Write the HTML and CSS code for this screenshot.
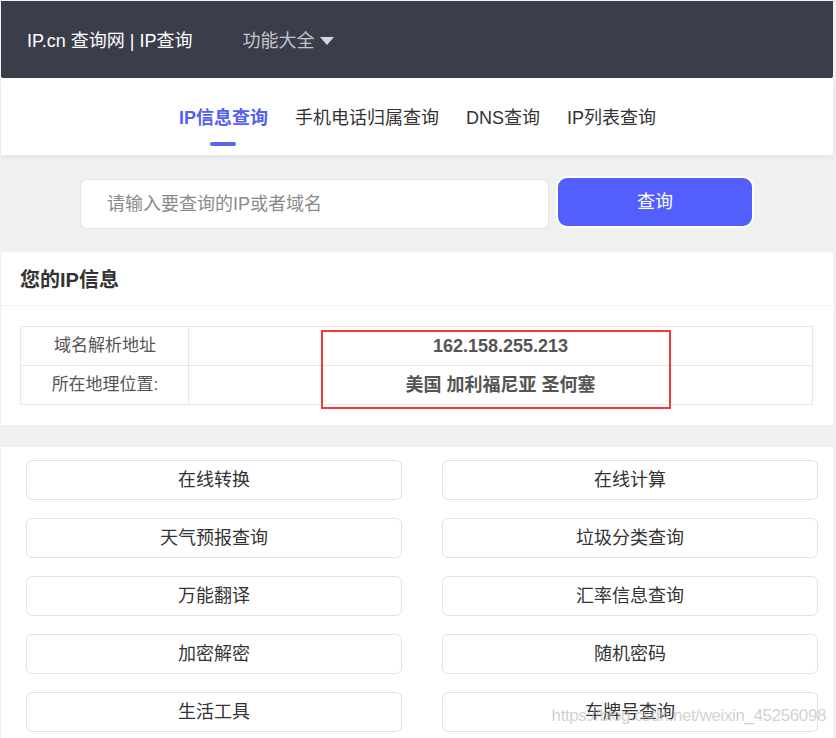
FILE: index.html
```html
<!DOCTYPE html>
<html lang="zh-CN">
<head>
<meta charset="utf-8">
<title>IP.cn 查询网 | IP查询</title>
<link rel="stylesheet" href="styles.css">
</head>
<body>
<div class="page">
  <header class="topbar">
    <span class="brand">IP.cn 查询网 | IP查询</span>
    <span class="menu">功能大全<span class="caret"></span></span>
  </header>
  <nav class="tabs">
    <a class="tab active">IP信息查询</a>
    <a class="tab">手机电话归属查询</a>
    <a class="tab">DNS查询</a>
    <a class="tab">IP列表查询</a>
  </nav>
  <section class="search">
    <div class="input">请输入要查询的IP或者域名</div>
    <div class="btn">查询</div>
  </section>
  <section class="card info">
    <h2 class="card-title">您的IP信息</h2>
    <div class="table-wrap">
      <table class="info-table">
        <tr><td class="label">域名解析地址</td><td class="value">162.158.255.213</td></tr>
        <tr><td class="label">所在地理位置:</td><td class="value">美国 加利福尼亚 圣何塞</td></tr>
      </table>
      <div class="highlight"></div>
    </div>
  </section>
  <section class="card tools">
    <a class="tool">在线转换</a>
    <a class="tool">在线计算</a>
    <a class="tool">天气预报查询</a>
    <a class="tool">垃圾分类查询</a>
    <a class="tool">万能翻译</a>
    <a class="tool">汇率信息查询</a>
    <a class="tool">加密解密</a>
    <a class="tool">随机密码</a>
    <a class="tool">生活工具</a>
    <a class="tool">车牌号查询</a>
    <div class="watermark">https://blog.csdn.net/weixin_45256098</div>
  </section>
</div>
</body>
</html>
```

FILE: styles.css
```css
html, body {
  margin: 0;
  padding: 0;
  background: #f0f0f1;
  height: 100%;
  overflow: hidden;
}
body {
  font-family: "Liberation Sans", "Noto Sans CJK SC", sans-serif;
  color: #333;
}
.page {
  padding: 1px 3px 0 1px;
}
.topbar {
  height: 77px;
  background: #3a3d4a;
  border-radius: 0 0 2px 2px;
  display: flex;
  align-items: center;
  padding-left: 26px;
  font-size: 18px;
  line-height: 24px;
}
.brand {
  color: #fff;
  padding-top: 2px;
}
.menu {
  color: #c4c6cc;
  margin-left: 50px;
  display: flex;
  align-items: center;
  padding-top: 2px;
}
.caret {
  width: 0;
  height: 0;
  border-left: 7px solid transparent;
  border-right: 7px solid transparent;
  border-top: 8px solid #d6d7db;
  margin-left: 6px;
}
.tabs {
  height: 77px;
  background: #fff;
  display: flex;
  justify-content: center;
  align-items: center;
  gap: 27px;
  box-shadow: 0 2px 5px rgba(40, 60, 120, 0.07);
  position: relative;
  padding-left: 1px;
}
.tab {
  font-size: 18px;
  line-height: 24px;
  color: #333;
  position: relative;
  padding-top: 2px;
}
.tab.active {
  color: #525ff2;
  font-weight: bold;
}
.tab.active::after {
  content: "";
  position: absolute;
  left: 50%;
  margin-left: -13px;
  top: 38px;
  width: 26px;
  height: 4px;
  border-radius: 2px;
  background: #5663f5;
}
.search {
  display: flex;
  justify-content: center;
  align-items: center;
  gap: 7px;
  padding: 24px 0 23px 0;
}
.input {
  width: 441px;
  height: 48px;
  background: #fff;
  border: 1px solid #e4e4e6;
  border-radius: 7px;
  padding-left: 26px;
  font-size: 18px;
  line-height: 48px;
  color: #8a8a8a;
}
.btn {
  width: 194px;
  height: 48px;
  background: #525ffd;
  border: 2px solid #fff;
  border-radius: 11px;
  color: #fff;
  font-size: 18px;
  line-height: 48px;
  text-align: center;
  margin-top: -4px;
}
.card {
  background: #fff;
}
.info {
  padding-bottom: 20px;
}
.card-title {
  margin: 0;
  height: 53px;
  line-height: 56px;
  padding-left: 19px;
  font-size: 20px;
  font-weight: bold;
  color: #333;
  border-bottom: 1px solid #f2f2f2;
}
.table-wrap {
  position: relative;
  margin: 20px 20px 0 19px;
}
.info-table {
  width: 100%;
  border-collapse: collapse;
}
.info-table td {
  border: 1px solid #e6e6e6;
  height: 38px;
  font-size: 17px;
  line-height: 22px;
  text-align: center;
  padding: 0;
}
.info-table .label {
  width: 166px;
  color: #555;
  padding-left: 1px;
}
.info-table .value {
  font-weight: bold;
  font-size: 18px;
  color: #555;
}
.highlight {
  position: absolute;
  left: 301px;
  top: 4px;
  width: 346px;
  height: 75px;
  border: 2px solid #f2393a;
}
.tools {
  margin-top: 22px;
  padding: 13px 15px 20px 25px;
  display: grid;
  grid-template-columns: 1fr 1fr;
  column-gap: 40px;
  row-gap: 18px;
  position: relative;
}
.tool {
  height: 38px;
  border: 1px solid #e2e2e4;
  border-radius: 6px;
  text-align: center;
  font-size: 18px;
  line-height: 38px;
  color: #333;
}
.watermark {
  position: absolute;
  right: 7px;
  top: 259px;
  font-size: 17px;
  color: rgba(190, 190, 190, 0.7);
  letter-spacing: -0.4px;
}
```
